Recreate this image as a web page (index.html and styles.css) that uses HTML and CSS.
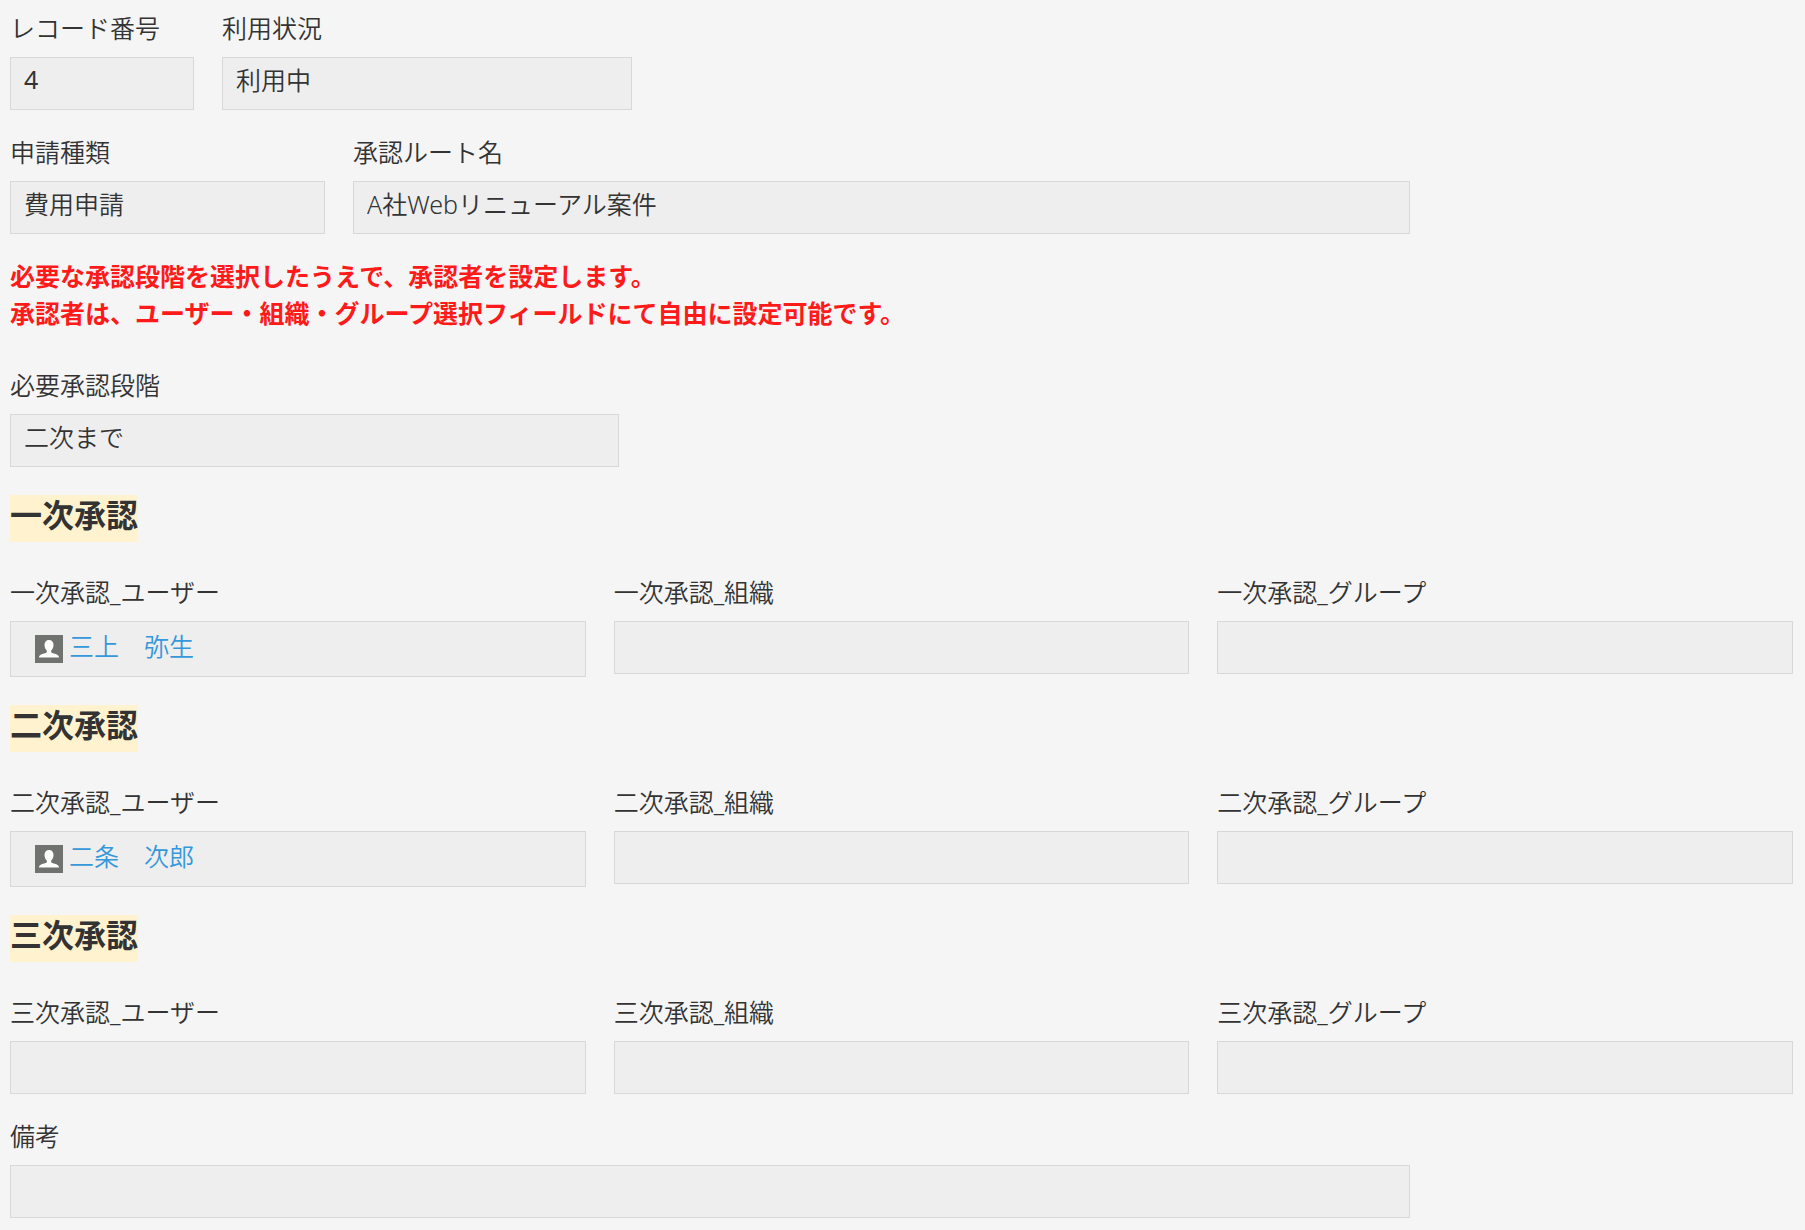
FILE: index.html
```html
<!DOCTYPE html>
<html lang="ja">
<head>
    <meta charset="UTF-8">
    <meta name="viewport" content="width=device-width, initial-scale=1.0">
    <title>承認ルート</title>
    <link rel="stylesheet" href="styles.css">
</head>
<body>
    <main class="record">
        <div class="row row-status">
            <div class="field">
                <label for="record_no">レコード番号</label>
                <input type="text" class="number" id="record_no" value="4" readonly>
            </div>
            <div class="field">
                <label for="status">利用状況</label>
                <input type="text" id="status" value="利用中" readonly>
            </div>
        </div>

        <div class="row row-route">
            <div class="field">
                <label for="request_type">申請種類</label>
                <input type="text" id="request_type" value="費用申請" readonly>
            </div>
            <div class="field">
                <label for="route_name">承認ルート名</label>
                <input type="text" id="route_name" value="A社Webリニューアル案件" readonly>
            </div>
        </div>

        <p class="notice">必要な承認段階を選択したうえで、承認者を設定します。<br>承認者は、ユーザー・組織・グループ選択フィールドにて自由に設定可能です。</p>

        <div class="row row-stage">
            <div class="field">
                <label for="stage">必要承認段階</label>
                <input type="text" id="stage" value="二次まで" readonly>
            </div>
        </div>

        <h2><span>一次承認</span></h2>
        <div class="row row-approver">
            <div class="field">
                <div class="label" id="user1_label">一次承認_ユーザー</div>
                <div class="users" role="group" aria-labelledby="user1_label">
                    <a href="#">
                        <svg class="avatar" viewBox="0 0 28 28" aria-hidden="true">
                            <rect width="28" height="28" fill="#70726f"/>
                            <path d="M4 22h20v1H4z" fill="#b5b6b5"/>
                            <path d="M14 5c-3 0-4.500 2-4.500 5 0 2.500 1 4.300 2.300 5.500v1.800C11.500 18.700 4.500 18.500 4 22h20c-.5-3.500-7.500-3.300-7.800-4.700v-1.800c1.300-1.200 2.300-3 2.300-5.500 0-3-1.500-5-4.500-5z" fill="#fff"/>
                        </svg>
                        <span>三上　弥生</span>
                    </a>
                </div>
            </div>
            <div class="field">
                <label for="org1">一次承認_組織</label>
                <input type="text" id="org1" readonly>
            </div>
            <div class="field">
                <label for="group1">一次承認_グループ</label>
                <input type="text" id="group1" readonly>
            </div>
        </div>

        <h2><span>二次承認</span></h2>
        <div class="row row-approver">
            <div class="field">
                <div class="label" id="user2_label">二次承認_ユーザー</div>
                <div class="users" role="group" aria-labelledby="user2_label">
                    <a href="#">
                        <svg class="avatar" viewBox="0 0 28 28" aria-hidden="true">
                            <rect width="28" height="28" fill="#70726f"/>
                            <path d="M4 22h20v1H4z" fill="#b5b6b5"/>
                            <path d="M14 5c-3 0-4.500 2-4.500 5 0 2.500 1 4.300 2.300 5.500v1.800C11.500 18.700 4.500 18.500 4 22h20c-.5-3.500-7.500-3.300-7.800-4.700v-1.800c1.300-1.200 2.300-3 2.300-5.500 0-3-1.500-5-4.500-5z" fill="#fff"/>
                        </svg>
                        <span>二条　次郎</span>
                    </a>
                </div>
            </div>
            <div class="field">
                <label for="org2">二次承認_組織</label>
                <input type="text" id="org2" readonly>
            </div>
            <div class="field">
                <label for="group2">二次承認_グループ</label>
                <input type="text" id="group2" readonly>
            </div>
        </div>

        <h2><span>三次承認</span></h2>
        <div class="row row-approver">
            <div class="field">
                <label for="user3">三次承認_ユーザー</label>
                <input type="text" id="user3" readonly>
            </div>
            <div class="field">
                <label for="org3">三次承認_組織</label>
                <input type="text" id="org3" readonly>
            </div>
            <div class="field">
                <label for="group3">三次承認_グループ</label>
                <input type="text" id="group3" readonly>
            </div>
        </div>

        <div class="row row-note">
            <div class="field">
                <label for="note">備考</label>
                <input type="text" id="note" readonly>
            </div>
        </div>
    </main>
</body>
</html>
```

FILE: styles.css
```css
* {
    box-sizing: border-box;
}

body {
    margin: 0;
    background: #f5f5f5;
    color: #333;
    font-family: "Noto Sans", "Noto Sans CJK JP", sans-serif;
    font-size: 25px;
    font-weight: 350;
}

.record {
    padding: 9px 12px 11px 10px;
}

.row {
    display: grid;
    gap: 28px;
}

.row + .row {
    margin-top: 23px;
}

.row-status {
    grid-template-columns: 184fr 410fr 1133fr;
}

.row-route {
    grid-template-columns: 315fr 1057fr 355fr;
}

.row-stage {
    grid-template-columns: 609fr 1146fr;
}

.row-approver {
    grid-template-columns: repeat(3, 1fr);
    align-items: start;
}

.row-note {
    grid-template-columns: 1400fr 355fr;
}

.field {
    display: flex;
    flex-direction: column;
    gap: 10px;
    min-width: 0;
}

label,
.label {
    line-height: 38px;
    white-space: nowrap;
}

input {
    width: 100%;
    height: 53px;
    padding: 0 13px 10px;
    border: 1px solid #d8d8d8;
    border-radius: 0;
    background: #eee;
    color: #333;
    font: inherit;
    outline: none;
}

.number {
    font-weight: 400;
}

.users {
    display: flex;
    height: 56px;
    padding: 7px 24px;
    border: 1px solid #d8d8d8;
    background: #eee;
}

.users a {
    display: flex;
    align-items: flex-end;
    gap: 6px;
    height: 34px;
    color: #3498db;
    line-height: 34px;
    text-decoration: none;
}

.avatar {
    width: 28px;
    height: 28px;
}

.notice {
    margin: 24px 0 34px;
    color: #ff1a1a;
    font-weight: 700;
    line-height: 37px;
}

h2 {
    display: flex;
    margin: 28px 0 31px;
    font-size: 32px;
    font-weight: 700;
}

h2 span {
    padding-bottom: 8px;
    background: #fff2cf;
    line-height: 39px;
}
```
